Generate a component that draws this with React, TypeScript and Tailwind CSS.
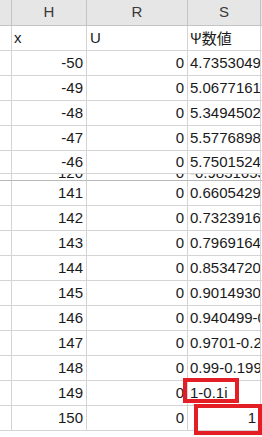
import React from "react";

type Row = { h: string; r: string; s: string; sRight?: boolean };

const topRows: Row[] = [
  { h: "-50", r: "0", s: "4.735304916" },
  { h: "-49", r: "0", s: "5.067716143" },
  { h: "-48", r: "0", s: "5.349450281" },
  { h: "-47", r: "0", s: "5.577689853" },
];

const bottomRows: Row[] = [
  { h: "141", r: "0", s: "0.660542957" },
  { h: "142", r: "0", s: "0.732391648" },
  { h: "143", r: "0", s: "0.796916432" },
  { h: "144", r: "0", s: "0.853472016" },
  { h: "145", r: "0", s: "0.901493021" },
  { h: "146", r: "0", s: "0.940499-0.3" },
  { h: "147", r: "0", s: "0.9701-0.2388i" },
  { h: "148", r: "0", s: "0.99-0.1999i" },
  { h: "149", r: "0", s: "1-0.1i" },
  { h: "150", r: "0", s: "1", sRight: true },
];

const grid = "grid grid-cols-[12px_75px_101px_73px_1px] grid-rows-[100%]";
const cell = "border-r border-b border-[#d4d4d4] flex items-center overflow-hidden whitespace-nowrap min-h-0";

function DataRow({ row, heightClass }: { row: Row; heightClass: string }) {
  return (
    <div className={`${grid} ${heightClass}`}>
      <div className={cell} />
      <div className={`${cell} justify-end pr-[3px]`}>{row.h}</div>
      <div className={`${cell} justify-end pr-[3px]`}>{row.r}</div>
      <div className={`${cell} ${row.sRight ? "justify-end pr-[4px]" : "pl-[2px]"}`}>{row.s}</div>
      <div className="border-b border-[#d4d4d4]" />
    </div>
  );
}

export default function App() {
  return (
    <div
      className="relative w-[262px] h-[437px] overflow-hidden bg-white text-[15px] text-[#1a1a1a]"
      style={{ fontFamily: '"Liberation Sans", "Noto Sans CJK JP", sans-serif' }}
    >
      {/* column header */}
      <div className={`${grid} h-[26px] bg-[#e6e6e6] text-[15px] text-[#3a3a3a]`}>
        <div className="border-r border-b border-[#c4c4c4]" />
        <div className="border-r border-b border-[#c4c4c4] flex items-center justify-center">H</div>
        <div className="border-r border-b border-[#c4c4c4] flex items-center justify-center">R</div>
        <div className="border-r border-b border-[#c4c4c4] flex items-center justify-center">S</div>
        <div className="border-b border-[#c4c4c4]" />
      </div>

      {/* label row */}
      <div className={`${grid} h-[25px]`}>
        <div className={cell} />
        <div className={`${cell} pl-[2px]`}>x</div>
        <div className={`${cell} pl-[3px]`}>U</div>
        <div
          className={`${cell} pl-[2px] text-[15px]`}
          style={{ fontFamily: '"Noto Sans CJK JP", "Liberation Sans", sans-serif' }}
        >
          Ψ数値
        </div>
        <div className="border-b border-[#d4d4d4]" />
      </div>

      {topRows.map((r) => (
        <DataRow key={r.h} row={r} heightClass="h-[25px]" />
      ))}
      <DataRow row={{ h: "-46", r: "0", s: "5.750152479" }} heightClass="h-[23px]" />

      {/* partially hidden row above the freeze line */}
      <div className="grid grid-cols-[12px_75px_101px_73px_1px] grid-rows-[6px] h-[7px] border-b border-[#b8b8b8] overflow-hidden">
        <div className="border-r border-[#d4d4d4]" />
        <div className="border-r border-[#d4d4d4] flex items-end justify-end pr-[3px] overflow-hidden min-h-0">
          <span className="leading-[15px] shrink-0">120</span>
        </div>
        <div className="border-r border-[#d4d4d4] flex items-end justify-end pr-[3px] overflow-hidden min-h-0">
          <span className="leading-[15px] shrink-0">0</span>
        </div>
        <div className="border-r border-[#d4d4d4] flex items-end pl-[2px] overflow-hidden whitespace-nowrap min-h-0">
          <span className="leading-[15px] shrink-0">-0.98316537</span>
        </div>
        <div />
      </div>

      {bottomRows.map((r) => (
        <DataRow key={r.h} row={r} heightClass="h-[25px]" />
      ))}

      {/* red annotation boxes */}
      <div className="absolute left-[183px] top-[378px] w-[56px] h-[25px] border-4 border-[#e31e25]" />
      <div className="absolute left-[194px] top-[404px] w-[68px] h-[31px] border-4 border-[#e31e25]" />
    </div>
  );
}
